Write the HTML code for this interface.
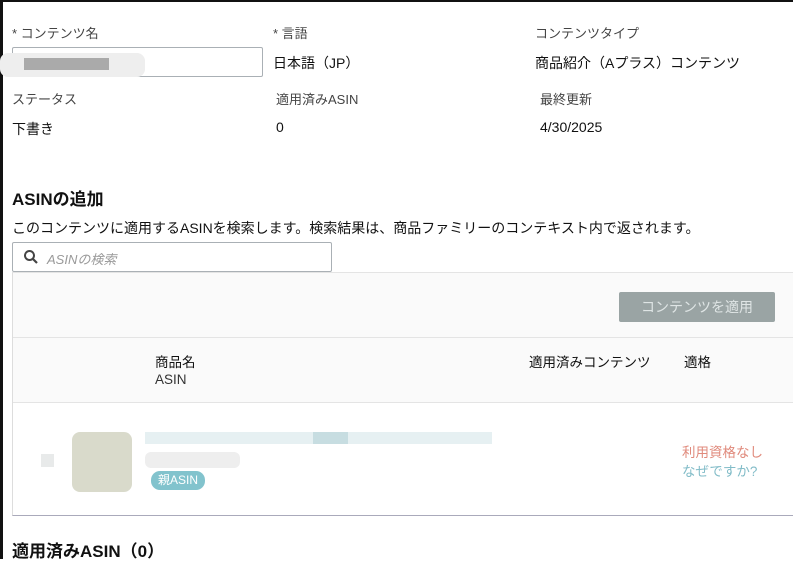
<!DOCTYPE html>
<html><head><meta charset="utf-8"><style>
*{margin:0;padding:0;box-sizing:border-box}
body{width:793px;height:559px;overflow:hidden;background:#fff;font-family:"Liberation Sans","Noto Sans CJK JP",sans-serif;color:#111;position:relative;font-size:13px}
.a{position:absolute;white-space:nowrap}
.lbl{color:#444;font-size:13px}
</style></head><body>
<div class="a" style="left:0;top:0;width:793px;height:2px;background:#111"></div>
<div class="a" style="left:0;top:0;width:3px;height:559px;background:#111"></div>

<div class="a lbl" style="left:12px;top:23px">* コンテンツ名</div>
<div class="a lbl" style="left:273px;top:23px">* 言語</div>
<div class="a lbl" style="left:535px;top:23px">コンテンツタイプ</div>
<div class="a" style="left:12px;top:47px;width:251px;height:30px;border:1px solid #aab0b5;border-radius:2px"></div>
<div class="a" style="left:0;top:53px;width:145px;height:24px;background:#eee;border-radius:8px"></div>
<div class="a" style="left:24px;top:58px;width:85px;height:12px;background:#aaa"></div>
<div class="a" style="left:273px;top:53px;font-size:14px">日本語（JP）</div>
<div class="a" style="left:535px;top:53px;font-size:14px">商品紹介（Aプラス）コンテンツ</div>

<div class="a lbl" style="left:12px;top:89px">ステータス</div>
<div class="a lbl" style="left:276px;top:89px">適用済みASIN</div>
<div class="a lbl" style="left:540px;top:89px">最終更新</div>
<div class="a" style="left:12px;top:119px;font-size:14px">下書き</div>
<div class="a" style="left:276px;top:119px;font-size:14px">0</div>
<div class="a" style="left:540px;top:119px;font-size:14px">4/30/2025</div>

<div class="a" style="left:12px;top:185px;font-size:17px;font-weight:bold">ASINの追加</div>
<div class="a" style="left:12px;top:218px;font-size:14px">このコンテンツに適用するASINを検索します。検索結果は、商品ファミリーのコンテキスト内で返されます。</div>
<div class="a" style="left:12px;top:242px;width:320px;height:30px;border:1px solid #aab0b5;border-radius:2px;background:#fff"></div>
<svg class="a" style="left:23px;top:249px" width="16" height="16" viewBox="0 0 16 16"><circle cx="6.5" cy="6.5" r="4.5" fill="none" stroke="#444" stroke-width="2"/><line x1="10" y1="10" x2="14" y2="14" stroke="#444" stroke-width="2.2"/></svg>
<div class="a" style="left:47px;top:249px;color:#999;font-style:italic;font-size:13px">ASINの検索</div>

<div class="a" style="left:12px;top:272px;width:781px;height:244px;background:#fafafa;border-left:1px solid #ddd;border-top:1px solid #e4e4e4;border-bottom:1px solid #aab"></div>
<div class="a" style="left:619px;top:292px;width:156px;height:30px;background:#9aa4a4;border-radius:2px;color:#dfe5e5;font-size:14px;text-align:center;line-height:30px">コンテンツを適用</div>
<div class="a" style="left:13px;top:337px;width:780px;height:1px;background:#e4e4e4"></div>
<div class="a" style="left:155px;top:351px;font-size:13.5px">商品名</div>
<div class="a" style="left:155px;top:372px;font-size:13.5px;color:#333">ASIN</div>
<div class="a" style="left:529px;top:351px;font-size:13.5px">適用済みコンテンツ</div>
<div class="a" style="left:684px;top:351px;font-size:13.5px">適格</div>
<div class="a" style="left:13px;top:402px;width:780px;height:113px;background:#fff;border-top:1px solid #e4e4e4"></div>
<div class="a" style="left:41px;top:454px;width:13px;height:13px;background:#e8eaea"></div>
<div class="a" style="left:72px;top:432px;width:60px;height:60px;background:#d9dacb;border-radius:8px"></div>
<div class="a" style="left:145px;top:432px;width:347px;height:12px;background:#e6f0f2"></div>
<div class="a" style="left:313px;top:432px;width:35px;height:12px;background:#c7dde1"></div>
<div class="a" style="left:145px;top:452px;width:95px;height:16px;background:#eee;border-radius:6px"></div>
<div class="a" style="left:151px;top:471px;width:54px;height:19px;background:#82c3cd;border-radius:9px;color:#fff;font-size:12px;text-align:center;line-height:19px">親ASIN</div>
<div class="a" style="left:682px;top:441px;color:#e08a7c;font-size:13.5px">利用資格なし</div>
<div class="a" style="left:682px;top:460px;color:#82bcc8;font-size:13.5px">なぜですか?</div>

<div class="a" style="left:12px;top:537px;font-size:17px;font-weight:bold">適用済みASIN（0）</div>
</body></html>
